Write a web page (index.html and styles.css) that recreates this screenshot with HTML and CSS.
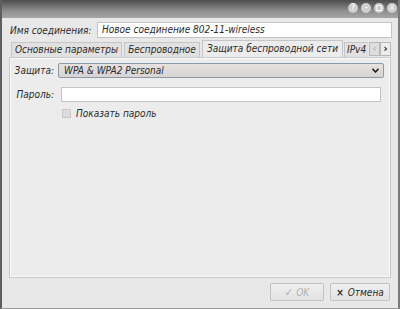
FILE: index.html
```html
<!DOCTYPE html>
<html>
<head>
<meta charset="utf-8">
<link rel="stylesheet" href="styles.css">
</head>
<body>
<div class="win">
  <div class="titlebar">
    <div class="tbtns">
      <span class="tb">?</span>
      <span class="tb">–</span>
      <span class="tb"><span class="sq"></span></span>
      <span class="tb">×</span>
    </div>
  </div>
  <div class="body">
    <div class="namerow">
      <span class="lbl">Имя соединения:</span>
      <div class="field name">Новое соединение 802-11-wireless</div>
    </div>
    <div class="tabs">
      <div class="tab t1">Основные параметры</div>
      <div class="tab t2">Беспроводное</div>
      <div class="tab active">Защита беспроводной сети</div>
      <div class="tab last">IPv4</div>
      <div class="arrows">
        <span class="arr dis">‹</span><span class="arr">›</span>
      </div>
    </div>
    <div class="panel">
      <div class="row">
        <span class="plbl">Защита:</span>
        <div class="select"><span>WPA &amp; WPA2 Personal</span>
          <svg class="caret" width="7" height="5" viewBox="0 0 7 5"><path d="M0.5 0.8 L3.5 4 L6.5 0.8" fill="none" stroke="#222" stroke-width="1.6"/></svg>
        </div>
      </div>
      <div class="row pw">
        <span class="plbl">Пароль:</span>
        <div class="field pwf"></div>
      </div>
      <div class="row chk">
        <span class="box"></span><span class="clbl">Показать пароль</span>
      </div>
    </div>
    <div class="buttons">
      <div class="btn ok"><span class="chkmark">✓</span>OK</div>
      <div class="btn cancel"><span class="x">×</span>Отмена</div>
    </div>
  </div>
</div>
</body>
</html>
```
FILE: styles.css
```css
html, body {
  margin: 0;
  padding: 0;
}
body {
  width: 400px;
  height: 309px;
  overflow: hidden;
  font-family: "DejaVu Sans Condensed", "DejaVu Sans", sans-serif;
  font-style: oblique;
  font-size: 10px;
  color: #2b2b2b;
}
.win {
  width: 400px;
  height: 309px;
  box-sizing: border-box;
  border-left: 2px solid #5e5e5e;
  border-right: 2px solid #7a7a7a;
  border-bottom: 1px solid #9a9a9a;
  background: #e8e8e8;
  display: flex;
  flex-direction: column;
}
.titlebar {
  height: 18px;
  flex: none;
  background: linear-gradient(#4c4c4c, #8e8e8e 60%, #a6a6a6);
  display: flex;
  justify-content: flex-end;
  align-items: flex-start;
  padding-top: 3px;
  box-sizing: border-box;
  padding-right: 1px;
}
.tbtns {
  display: flex;
  gap: 3px;
}
.tb {
  width: 10px;
  height: 10px;
  border-radius: 50%;
  background: #cfcfcf;
  color: #f4f4f4;
  font-style: normal;
  font-weight: bold;
  font-size: 8px;
  line-height: 10px;
  text-align: center;
  display: flex;
  align-items: center;
  justify-content: center;
}
.sq {
  width: 4px;
  height: 4px;
  border: 1px solid #f4f4f4;
}
.body {
  flex: 1;
  display: flex;
  flex-direction: column;
  padding: 4px 6px 0 7px;
}
.namerow {
  display: flex;
  align-items: center;
  height: 16px;
}
.lbl {
  width: 88px;
  box-sizing: border-box;
  padding-left: 1px;
  white-space: nowrap;
  flex: none;
}
.field {
  background: #fff;
  border: 1px solid #c4c4c4;
  box-sizing: border-box;
  padding-left: 4px;
  white-space: nowrap;
}
.name {
  flex: 1;
  height: 16px;
  line-height: 14px;
}
.tabs {
  margin-top: 2px;
  display: flex;
  align-items: flex-end;
  height: 17px;
  padding-left: 2px;
  gap: 2px;
}
.tab {
  height: 15px;
  box-sizing: border-box;
  border: 1px solid #c6c6c6;
  border-bottom: none;
  background: #e1e1e1;
  line-height: 14px;
  white-space: nowrap;
  text-align: center;
  flex: none;
}
.t1 { width: 111px; }
.t2 { width: 76px; }
.tab.active {
  width: 141px;
  height: 17px;
  background: #ececec;
  line-height: 16px;
}
.tab.last {
  width: 24px;
  overflow: hidden;
  border-right: none;
  text-align: left;
  padding-left: 2px;
  margin-left: -1px;
}
.arrows {
  display: flex;
  height: 14px;
  margin-bottom: 1px;
  margin-left: -1px;
}
.arr {
  width: 11px;
  height: 14px;
  box-sizing: border-box;
  border: 1px solid #b8b8b8;
  background: #ececec;
  font-style: normal;
  font-weight: bold;
  font-size: 11px;
  line-height: 11px;
  text-align: center;
  color: #111;
}
.arr.dis {
  color: #bbb;
  background: #dedede;
}
.panel {
  height: 221px;
  box-sizing: border-box;
  border: 1px solid #c8c8c8;
  box-shadow: inset 1px 1px 0 #fafafa, inset -1px -1px 0 #fafafa;
  background: #ececec;
  margin-right: 1px;
  padding: 5px 6px 0 4px;
}
.row {
  display: flex;
  align-items: center;
}
.plbl {
  width: 40px;
  text-align: right;
  flex: none;
}
.select {
  margin-left: 4px;
  flex: 1;
  height: 15px;
  box-sizing: border-box;
  border: 1px solid #8d9aa6;
  border-radius: 2px;
  background: linear-gradient(#e6e2e2, #d9d4d4);
  display: flex;
  align-items: center;
  justify-content: space-between;
  padding: 0 4px 0 5px;
}
.caret {
  display: block;
}
.pw {
  margin-top: 9px;
}
.pwf {
  margin-left: 7px;
  height: 15px;
  width: 320px;
  flex: none;
}
.chk {
  margin-top: 6px;
  padding-left: 48px;
}
.box {
  width: 9px;
  height: 9px;
  box-sizing: border-box;
  border: 1px solid #c8c8c8;
  background: #dcdcdc;
  margin-right: 5px;
}
.buttons {
  display: flex;
  justify-content: flex-end;
  gap: 6px;
  margin-top: 5px;
  margin-right: 2px;
}
.btn {
  height: 18px;
  box-sizing: border-box;
  border: 1px solid #c2c2c2;
  border-radius: 2px;
  background: linear-gradient(#f0f0f0, #e2e2e2);
  display: flex;
  align-items: center;
  justify-content: center;
}
.ok {
  width: 54px;
  color: #b0b0b0;
}
.chkmark {
  font-style: normal;
  margin-right: 3px;
  font-size: 11px;
}
.cancel {
  width: 60px;
}
.x {
  font-style: normal;
  margin-right: 4px;
  font-weight: bold;
}
```
